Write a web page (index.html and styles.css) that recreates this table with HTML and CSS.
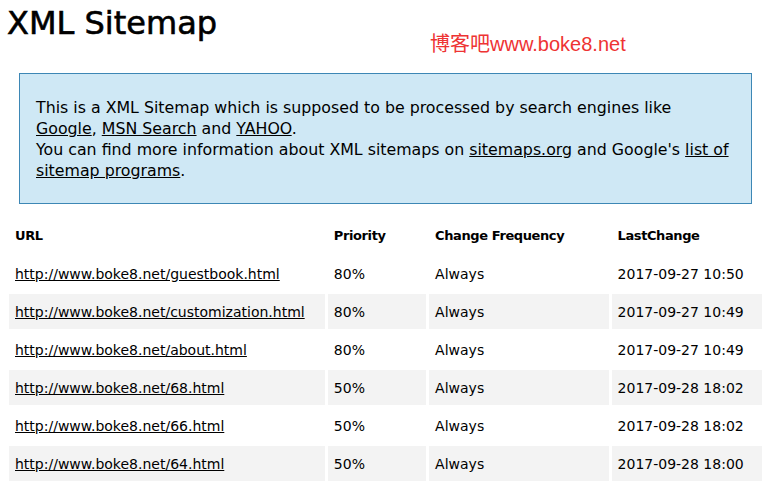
FILE: index.html
```html
<!DOCTYPE html>
<html>
<head>
<meta charset="utf-8">
<title>XML Sitemap</title>
<link rel="stylesheet" href="styles.css">
</head>
<body>
<header class="top">
  <h1 class="title">XML Sitemap</h1>
  <span class="brand">博客吧www.boke8.net</span>
</header>
<div class="intro">
  <p>This is a XML Sitemap which is supposed to be processed by search engines like <a href="#">Google</a>, <a href="#">MSN Search</a> and <a href="#">YAHOO</a>.<br>
  You can find more information about XML sitemaps on <a href="#">sitemaps.org</a> and Google's <a href="#">list of sitemap programs</a>.</p>
</div>
<table class="sitemap">
  <thead>
    <tr><th class="c-url">URL</th><th class="c-pri">Priority</th><th class="c-freq">Change Frequency</th><th class="c-last">LastChange</th></tr>
  </thead>
  <tbody>
    <tr><td><a href="#">http://www.boke8.net/guestbook.html</a></td><td>80%</td><td>Always</td><td>2017-09-27 10:50</td></tr>
    <tr class="alt"><td><a href="#">http://www.boke8.net/customization.html</a></td><td>80%</td><td>Always</td><td>2017-09-27 10:49</td></tr>
    <tr><td><a href="#">http://www.boke8.net/about.html</a></td><td>80%</td><td>Always</td><td>2017-09-27 10:49</td></tr>
    <tr class="alt"><td><a href="#">http://www.boke8.net/68.html</a></td><td>50%</td><td>Always</td><td>2017-09-28 18:02</td></tr>
    <tr><td><a href="#">http://www.boke8.net/66.html</a></td><td>50%</td><td>Always</td><td>2017-09-28 18:02</td></tr>
    <tr class="alt"><td><a href="#">http://www.boke8.net/64.html</a></td><td>50%</td><td>Always</td><td>2017-09-28 18:00</td></tr>
  </tbody>
</table>
</body>
</html>
```
FILE: styles.css
```css
html, body {
  margin: 0;
  padding: 0;
  background: #fff;
  color: #000;
  font-family: "DejaVu Sans", "Noto Sans CJK SC", sans-serif;
}
body {
  padding: 0 6px 0 9px;
}
.top {
  display: flex;
  align-items: flex-start;
  height: 73px;
}
.title {
  margin: 0;
  margin-left: -2px;
  padding-top: 3px;
  font-size: 32px;
  font-weight: normal;
  line-height: 40px;
  -webkit-text-stroke: 0.6px #000;
}
.brand {
  margin-left: 213px;
  margin-top: 32px;
  color: #ee3333;
  font-family: "Liberation Sans", "Noto Sans CJK SC", sans-serif;
  font-size: 20px;
  line-height: 24px;
}
.intro {
  margin-left: 10px;
  margin-right: 10px;
  background: #cfe8f5;
  border: 1px solid #3d87b5;
  padding: 23px 18px 22px 16px;
  height: 84px;
}
.intro p {
  margin: 0;
  font-size: 15.8px;
  line-height: 21px;
}
.intro a {
  color: #000;
}
.sitemap {
  margin-top: 11px;
  border-spacing: 3px;
  margin-left: -3px;
  font-size: 14px;
  width: 759px;
}
.sitemap th {
  text-align: left;
  font-weight: bold;
  font-size: 13px;
  letter-spacing: -0.4px;
  height: 35px;
  padding: 0 6px;
}
.sitemap td {
  height: 35px;
  padding: 0 6px;
}
.sitemap a {
  color: #000;
}
.sitemap tr.alt td {
  background: #f3f3f3;
}
.c-url { width: 303px; }
.c-pri { width: 86px; }
.c-freq { width: 167px; }
.c-last { width: 138px; }
```
